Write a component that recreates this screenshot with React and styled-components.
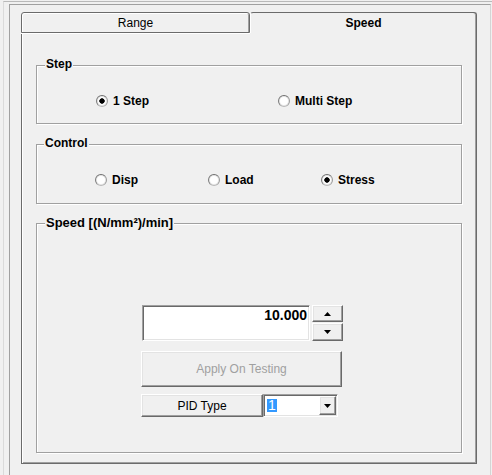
import React from 'react';
import styled, { createGlobalStyle, css } from 'styled-components';

// --- global ---
const GlobalStyle = createGlobalStyle`
  html, body { margin: 0; padding: 0; background: #f0f0f0; }
  body {
    font-family: "Liberation Sans", Arial, sans-serif;
    font-size: 12px;
    color: #000;
  }
  * { box-sizing: border-box; }
`;

// --- 3D helpers (win classic) ---
const raised = css`
  background: #f0f0f0;
  border: 1px solid;
  border-color: #fff #696969 #696969 #fff;
  box-shadow: inset -1px -1px 0 #a0a0a0, inset 1px 1px 0 #e3e3e3;
`;

const sunken = css`
  background: #fff;
  border: 1px solid;
  border-color: #a0a0a0 #fff #fff #a0a0a0;
  box-shadow: inset 1px 1px 0 #696969, inset -1px -1px 0 #e3e3e3;
`;

// --- frames ---
const Window = styled.div`
  width: 492px;
  height: 475px;
  padding-top: 1px;
  overflow: hidden;
`;

const OuterFrame = styled.div`
  margin-left: 3px;
  height: 474px;
  border-top: 1px solid #b9b9b9;
  border-left: 1px solid #dadada;
  padding: 2px 0 0 5px;
`;

const InnerFrame = styled.div`
  width: 482px;
  height: 100%;
  border-top: 1px solid #a0a0a0;
  border-left: 1px solid #a0a0a0;
  border-right: 1px solid #d4d4d4;
  padding: 7px 0 0 11px;
`;

// --- tabs ---
const TabControl = styled.div`
  width: 456px;
`;

const TabStrip = styled.div`
  display: flex;
  height: 21px;
`;

const Tab = styled.div`
  position: relative;
  z-index: 1;
  width: ${p => p.$width}px;
  height: 21px;
  border: 1px solid #6b6b6b;
  border-radius: 3px 3px 0 0;
  padding-top: 1px;
  text-align: center;
  line-height: 18px;
  font-weight: ${p => (p.$selected ? 700 : 400)};
  ${p => p.$selected
    ? css`
      border-bottom: none;
      border-left-color: #fff;
      box-shadow: inset -1px 0 0 #a0a0a0;
    `
    : css`
      box-shadow: inset 1px 1px 0 #fff, inset -1px 0 0 #a0a0a0, 0 1px 0 #fff;
    `}
`;

const Page = styled.div`
  width: 456px;
  height: 431px;
  border: 1px solid #6b6b6b;
  border-top: none;
  box-shadow: inset 1px 0 0 #fff, inset -1px -1px 0 #a0a0a0;
  padding: 32px 14px 0 14px;
  display: flex;
  flex-direction: column;
`;

// --- group boxes ---
const GroupBox = styled.div`
  position: relative;
  width: 426px;
  height: ${p => p.$height}px;
  margin-top: ${p => p.$gap || 0}px;
  border: 1px solid #a0a0a0;
  box-shadow: 1px 1px 0 #fff, inset 1px 1px 0 #fff;
`;

const Legend = styled.span`
  position: absolute;
  top: -9px;
  left: ${p => p.$left || 8}px;
  padding: 0 1px;
  background: #f0f0f0;
  font-weight: 700;
  font-size: ${p => p.$size || 12}px;
  line-height: ${p => (p.$size || 12) + 2}px;
`;

// --- radios ---
const RadioRow = styled.div`
  display: flex;
  padding: 28px 0 0 ${p => p.$indent}px;
`;

const RadioOption = styled.label`
  display: flex;
  align-items: center;
  gap: 5px;
  width: ${p => p.$width}px;
  height: 14px;
  font-weight: 700;
`;

const RadioDot = styled.span`
  width: 12px;
  height: 12px;
  flex: none;
  border-radius: 50%;
  border: 1px solid;
  border-color: #6f6f6f #9a9a9a #b8b8b8 #7a7a7a;
  box-shadow: inset 0 0 0 1px #e6e6e6;
  background: ${p => (p.$checked
    ? 'radial-gradient(circle, #000 0, #000 2.4px, #fff 3px)'
    : '#fff')};
`;

// --- speed controls ---
const Controls = styled.div`
  display: flex;
  flex-direction: column;
  align-items: flex-start;
  padding: 81px 0 0 104px;
`;

const EditRow = styled.div`
  display: flex;
  gap: 2px;
  margin-left: 1px;
`;

const NumberEdit = styled.div`
  ${sunken};
  width: 168px;
  height: 36px;
  padding: 1px 2px 0 0;
  text-align: right;
  font-size: 14px;
  font-weight: 700;
  line-height: 16px;
`;

const SpinColumn = styled.div`
  display: flex;
  flex-direction: column;
  gap: 1px;
`;

const SpinButton = styled.div`
  ${raised};
  width: 31px;
  height: ${p => p.$h}px;
  display: flex;
  align-items: center;
  justify-content: center;
`;

const PushButton = styled.div`
  ${raised};
  width: ${p => p.$width}px;
  height: ${p => p.$height}px;
  margin-top: ${p => p.$gap || 0}px;
  display: flex;
  align-items: center;
  justify-content: center;
  color: ${p => (p.$disabled ? '#a0a0a0' : '#000')};
`;

const PidRow = styled.div`
  display: flex;
  margin-top: 7px;
`;

const Combo = styled.div`
  ${sunken};
  width: 75px;
  height: 23px;
  display: flex;
  padding: 1px;
`;

const ComboField = styled.div`
  flex: 1;
  padding: 3px 0 0 2px;
`;

const Selected = styled.span`
  display: inline-block;
  background: #3399ff;
  color: #fff;
  font-size: 14px;
  line-height: 13px;
  height: 13px;
  padding: 0 1px;
`;

const DropButton = styled.div`
  ${raised};
  width: 17px;
  height: 19px;
  display: flex;
  align-items: center;
  justify-content: center;
`;

const Arrow = ({ down }) => (
  <svg width="7" height="4" viewBox="0 0 7 4">
    <polygon points={down ? '0,0 7,0 3.5,4' : '0,4 7,4 3.5,0'} fill="#000" />
  </svg>
);

export default function App() {
  return (
    <>
      <GlobalStyle />
      <Window>
        <OuterFrame>
          <InnerFrame>
            <TabControl>
              <TabStrip>
                <Tab $width={229}>Range</Tab>
                <Tab $width={227} $selected>Speed</Tab>
              </TabStrip>
              <Page>
                <GroupBox $height={59}>
                  <Legend $left={8}>Step</Legend>
                  <RadioRow $indent={59}>
                    <RadioOption $width={182}><RadioDot $checked />1 Step</RadioOption>
                    <RadioOption $width={120}><RadioDot />Multi Step</RadioOption>
                  </RadioRow>
                </GroupBox>

                <GroupBox $height={60} $gap={20}>
                  <Legend $left={7}>Control</Legend>
                  <RadioRow $indent={58}>
                    <RadioOption $width={113}><RadioDot />Disp</RadioOption>
                    <RadioOption $width={113}><RadioDot />Load</RadioOption>
                    <RadioOption $width={100}><RadioDot $checked />Stress</RadioOption>
                  </RadioRow>
                </GroupBox>

                <GroupBox $height={230} $gap={19}>
                  <Legend $left={8} $size={13}>Speed [(N/mm²)/min]</Legend>
                  <Controls>
                    <EditRow>
                      <NumberEdit>10.000</NumberEdit>
                      <SpinColumn>
                        <SpinButton $h={17}><Arrow /></SpinButton>
                        <SpinButton $h={18}><Arrow down /></SpinButton>
                      </SpinColumn>
                    </EditRow>
                    <PushButton $width={201} $height={36} $gap={10} $disabled>
                      Apply On Testing
                    </PushButton>
                    <PidRow>
                      <PushButton $width={122} $height={23}>PID Type</PushButton>
                      <Combo>
                        <ComboField><Selected>1</Selected></ComboField>
                        <DropButton><Arrow down /></DropButton>
                      </Combo>
                    </PidRow>
                  </Controls>
                </GroupBox>
              </Page>
            </TabControl>
          </InnerFrame>
        </OuterFrame>
      </Window>
    </>
  );
}
